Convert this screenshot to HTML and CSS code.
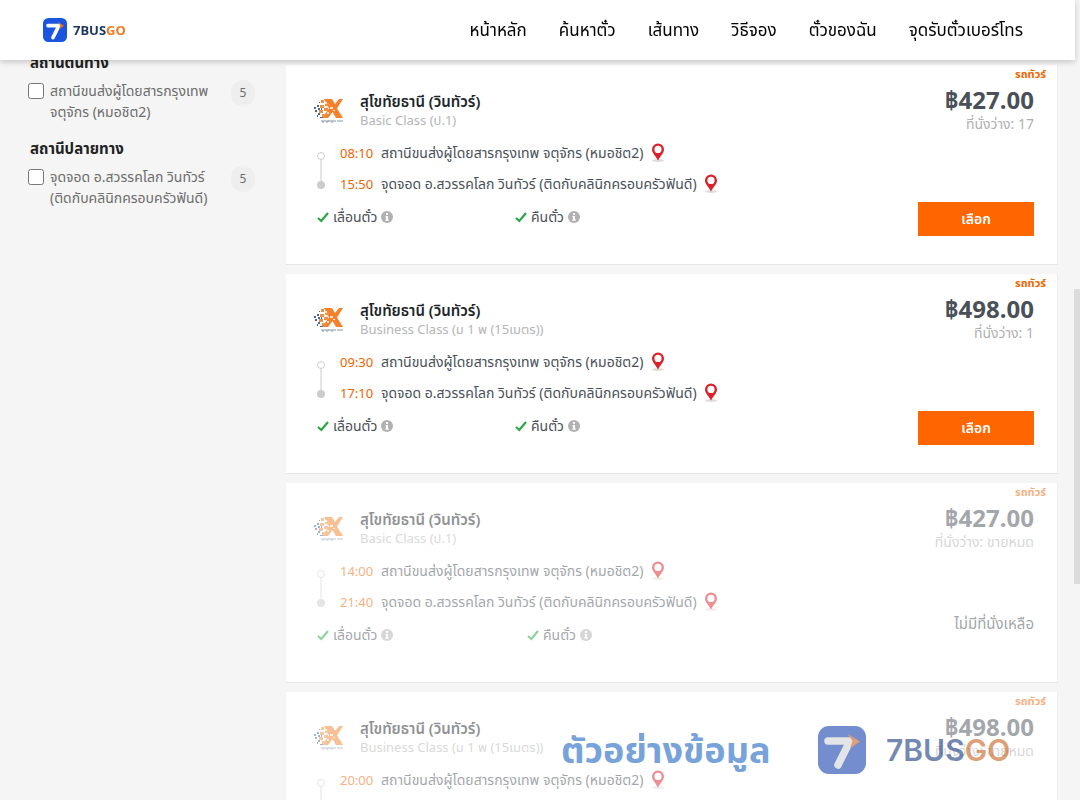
FILE: index.html
```html
<!DOCTYPE html>
<html lang="th">
<head>
<meta charset="utf-8">
<meta name="viewport" content="width=device-width, initial-scale=1">
<title>7BUSGO</title>
<link rel="stylesheet" href="styles.css">
</head>
<body>
<svg class="sprite" aria-hidden="true">
  <symbol id="brand" viewBox="0 0 48 48">
    <rect class="brand-tile" width="48" height="48" rx="11"/>
    <path class="brand-seven" d="M10 15H32L20 39" fill="none" stroke-width="7.5" stroke-linecap="round" stroke-linejoin="round"/>
    <path class="brand-arrow" d="M29 7.500L42 15.500L32 22.500L34.500 15Z"/>
  </symbol>
  <symbol id="operator" viewBox="0 0 32 28">
    <path d="M11 2H19L22 7L26 2H30L24 11.500L30 21H23L19.500 15L15 21H9L16 11.500Z" fill="#f5822a"/>
    <path d="M8 3h3v3h-3zM12 6h4v3h-4zM7 8h4v3H7zM11 11h4v3h-4zM6 13h4v3H6zM9 17h4v3H9z" fill="#ef9145"/>
    <path d="M6 5h1v1H6zM4 8h2v2H4zM1 10h2v2H1zM5 11h2v2H5zM2 13h2v2H2zM5 16h2v2H5zM4 18h1v2H4zM8 11h1v2H8zM7 20h3v1H7z" fill="#456a9a"/>
    <path d="M12 5h2v2h-2zM13 9h2v2h-2zM14 15h2v2h-2zM17 10h3v2h-3zM20 13h2v1h-2z" fill="#fbe3cf"/>
    <path d="M9 23v2h2v-2M13 23v2h2v-2M16 23v2M18 23v2h2v-2M21 24h2M25 23v2M27 23v2M29 23v2" fill="none" stroke="#8796ae" stroke-width="1"/>
  </symbol>
  <symbol id="pin" viewBox="0 0 14 20">
    <ellipse cx="7" cy="17.500" rx="6" ry="1.500" fill="#e0dcdc"/>
    <path fill-rule="evenodd" d="M7 0.500A6 6 0 0 0 1 6.500C1 10 4.500 12.500 7 17.500C9.500 12.500 13 10 13 6.500A6 6 0 0 0 7 0.500ZM7 2.800A3.600 3.600 0 1 1 7 10A3.600 3.600 0 1 1 7 2.800Z" fill="#dc2028"/>
  </symbol>
  <symbol id="check" viewBox="0 0 12 12"><path d="M1 7L4.300 10L11 2" fill="none" stroke="#28a745" stroke-width="2.200"/></symbol>
  <symbol id="info" viewBox="0 0 12 12"><circle cx="6" cy="6" r="6" fill="#b1b1b1"/><path d="M5 2h2v2H5zM4.500 5H7v3.500h.8v1.200H4.300V8.500H5V6.200h-.5z" fill="#fff"/></symbol>
  <symbol id="route" viewBox="0 0 10 40"><path d="M5 8V34" stroke="#ddd" stroke-width="1.500"/><circle cx="5" cy="5" r="3.500" fill="#fff" stroke="#ccc"/><circle cx="5" cy="34" r="4" fill="#ccc"/></symbol>
</svg>

<header class="header">
  <a class="brand" href="#"><svg class="brand-icon" aria-hidden="true"><use href="#brand"/></svg><span>7BUS<span class="go">GO</span></span></a>
  <nav class="nav">
    <a href="#">หน้าหลัก</a><a href="#">ค้นหาตั๋ว</a><a href="#">เส้นทาง</a><a href="#">วิธีจอง</a><a href="#">ตั๋วของฉัน</a><a href="#">จุดรับตั๋วเบอร์โทร</a>
  </nav>
</header>

<main class="page">
  <aside class="filters">
    <h3>สถานีต้นทาง</h3>
    <div class="filter">
      <input type="checkbox" id="origin">
      <label for="origin">สถานีขนส่งผู้โดยสารกรุงเทพ<br>จตุจักร (หมอชิต2)</label>
      <span class="count">5</span>
    </div>
    <h3>สถานีปลายทาง</h3>
    <div class="filter">
      <input type="checkbox" id="destination">
      <label for="destination">จุดจอด อ.สวรรคโลก วินทัวร์<br>(ติดกับคลินิกครอบครัวฟันดี)</label>
      <span class="count">5</span>
    </div>
  </aside>

  <section class="trips">
    <article class="trip">
      <span class="tag">รถทัวร์</span>
      <div class="details">
        <div class="operator"><svg class="operator-logo" aria-hidden="true"><use href="#operator"/></svg><div><h2>สุโขทัยธานี (วินทัวร์)</h2><p>Basic Class (ป.1)</p></div></div>
        <div class="journey"><svg class="route" aria-hidden="true"><use href="#route"/></svg>
          <div class="stops">
            <div class="stop"><time>08:10</time><span>สถานีขนส่งผู้โดยสารกรุงเทพ จตุจักร (หมอชิต2)</span><svg class="pin"><use href="#pin"/></svg></div>
            <div class="stop"><time>15:50</time><span>จุดจอด อ.สวรรคโลก วินทัวร์ (ติดกับคลินิกครอบครัวฟันดี)</span><svg class="pin"><use href="#pin"/></svg></div>
          </div>
        </div>
        <div class="perks"><span class="perk"><svg><use href="#check"/></svg>เลื่อนตั๋ว<svg><use href="#info"/></svg></span><span class="perk"><svg><use href="#check"/></svg>คืนตั๋ว<svg><use href="#info"/></svg></span></div>
      </div>
      <div class="fare"><strong>฿427.00</strong><p>ที่นั่งว่าง: 17</p><button type="button">เลือก</button></div>
    </article>

    <article class="trip">
      <span class="tag">รถทัวร์</span>
      <div class="details">
        <div class="operator"><svg class="operator-logo" aria-hidden="true"><use href="#operator"/></svg><div><h2>สุโขทัยธานี (วินทัวร์)</h2><p>Business Class (ม 1 พ (15เมตร))</p></div></div>
        <div class="journey"><svg class="route" aria-hidden="true"><use href="#route"/></svg>
          <div class="stops">
            <div class="stop"><time>09:30</time><span>สถานีขนส่งผู้โดยสารกรุงเทพ จตุจักร (หมอชิต2)</span><svg class="pin"><use href="#pin"/></svg></div>
            <div class="stop"><time>17:10</time><span>จุดจอด อ.สวรรคโลก วินทัวร์ (ติดกับคลินิกครอบครัวฟันดี)</span><svg class="pin"><use href="#pin"/></svg></div>
          </div>
        </div>
        <div class="perks"><span class="perk"><svg><use href="#check"/></svg>เลื่อนตั๋ว<svg><use href="#info"/></svg></span><span class="perk"><svg><use href="#check"/></svg>คืนตั๋ว<svg><use href="#info"/></svg></span></div>
      </div>
      <div class="fare"><strong>฿498.00</strong><p>ที่นั่งว่าง: 1</p><button type="button">เลือก</button></div>
    </article>

    <article class="trip sold-out">
      <span class="tag">รถทัวร์</span>
      <div class="details">
        <div class="operator"><svg class="operator-logo" aria-hidden="true"><use href="#operator"/></svg><div><h2>สุโขทัยธานี (วินทัวร์)</h2><p>Basic Class (ป.1)</p></div></div>
        <div class="journey"><svg class="route" aria-hidden="true"><use href="#route"/></svg>
          <div class="stops">
            <div class="stop"><time>14:00</time><span>สถานีขนส่งผู้โดยสารกรุงเทพ จตุจักร (หมอชิต2)</span><svg class="pin"><use href="#pin"/></svg></div>
            <div class="stop"><time>21:40</time><span>จุดจอด อ.สวรรคโลก วินทัวร์ (ติดกับคลินิกครอบครัวฟันดี)</span><svg class="pin"><use href="#pin"/></svg></div>
          </div>
        </div>
        <div class="perks"><span class="perk"><svg><use href="#check"/></svg>เลื่อนตั๋ว<svg><use href="#info"/></svg></span><span class="perk"><svg><use href="#check"/></svg>คืนตั๋ว<svg><use href="#info"/></svg></span></div>
      </div>
      <div class="fare"><strong>฿427.00</strong><p>ที่นั่งว่าง: ขายหมด</p><span class="none">ไม่มีที่นั่งเหลือ</span></div>
    </article>

    <article class="trip sold-out">
      <span class="tag">รถทัวร์</span>
      <div class="details">
        <div class="operator"><svg class="operator-logo" aria-hidden="true"><use href="#operator"/></svg><div><h2>สุโขทัยธานี (วินทัวร์)</h2><p>Business Class (ม 1 พ (15เมตร))</p></div></div>
        <div class="journey"><svg class="route" aria-hidden="true"><use href="#route"/></svg>
          <div class="stops">
            <div class="stop"><time>20:00</time><span>สถานีขนส่งผู้โดยสารกรุงเทพ จตุจักร (หมอชิต2)</span><svg class="pin"><use href="#pin"/></svg></div>
          </div>
        </div>
      </div>
      <div class="fare"><strong>฿498.00</strong><p>ที่นั่งว่าง: ขายหมด</p></div>
    </article>
  </section>
</main>

<div class="watermark">
  <span class="sample">ตัวอย่างข้อมูล</span>
  <svg class="watermark-icon" aria-hidden="true"><use href="#brand"/></svg>
  <span class="watermark-name">7BUS<span class="go">GO</span></span>
</div>
<div class="scrollbar"></div>
</body>
</html>
```
FILE: styles.css
```css
* { box-sizing: border-box; }
body {
  margin: 0;
  height: 100vh;
  overflow: hidden;
  background: #f5f5f5;
  color: #495057;
  font-family: "Noto Sans", "Noto Sans Thai", sans-serif;
  font-size: 14px;
  line-height: 20px;
}
h2, h3, p { margin: 0; }
a { color: inherit; text-decoration: none; }
.sprite { position: absolute; width: 0; height: 0; }
.brand-tile { fill: var(--tile, #1b55df); }
.brand-seven { stroke: var(--seven, #fff); }
.brand-arrow { fill: var(--arrow, #f07018); }
.header {
  position: fixed;
  z-index: 2;
  top: 0;
  left: 0;
  right: 5px;
  height: 60px;
  padding: 0 52px 0 43px;
  display: flex;
  align-items: center;
  justify-content: space-between;
  background: #fff;
  box-shadow: 0 2px 6px rgba(0, 0, 0, .2);
}
.brand { display: flex; align-items: center; gap: 6px; color: #1c355e; font-size: 13px; font-weight: 700; }
.brand-icon { width: 24px; height: 24px; }
.go { color: #f47a20; }
.nav { display: flex; gap: 32px; color: #000; font-size: 17px; }
.page { display: flex; gap: 31px; padding: 52px 22px 0 28px; }
.filters { flex: 0 0 227px; color: #6c6c6c; }
.filters h3 { padding-left: 2px; color: #222; font-size: 15px; line-height: 20px; }
.filter { display: flex; align-items: flex-start; gap: 6px; padding: 8px 0 16px; }
.filter input { width: 16px; height: 16px; margin: 3px 0 0; }
.filter label { flex: 1; line-height: 21px; white-space: nowrap; }
.count { width: 24px; height: 26px; border-radius: 12px; background: #eee; text-align: center; line-height: 26px; font-size: 12px; }
.trips { flex: 1; display: flex; flex-direction: column; gap: 9px; padding-top: 13px; }
.trip {
  position: relative;
  display: flex;
  justify-content: space-between;
  min-height: 200px;
  padding: 26px 23px 28px 27px;
  background: #fff;
  border-bottom: 1px solid #e4e6e7;
  border-right: 1px solid #eef0f0;
}
.tag { position: absolute; top: 1px; right: 11px; color: #f06400; font-size: 11px; line-height: 16px; font-weight: 700; }
.details { flex: 1; }
.operator { display: flex; align-items: center; gap: 15px; }
.operator-logo { width: 32px; height: 28px; margin-top: 2px; }
.operator h2 { color: #212529; font-size: 15px; line-height: 20px; font-weight: 600; }
.operator p { color: #b5b5b5; font-size: 13px; line-height: 18px; }
.journey { display: flex; gap: 14px; padding: 8px 0 8px 3px; }
.route { width: 10px; height: 40px; margin-top: 14px; }
.stop { display: flex; align-items: center; gap: 7px; height: 31px; color: #495057; }
.stop time { width: 34px; color: #f06400; font-size: 13px; }
.pin { width: 14px; height: 20px; }
.perks { display: flex; padding-left: 4px; }
.perk { display: flex; align-items: center; gap: 4px; width: 198px; }
.sold-out .perk:first-child { width: 210px; }
.perk svg { width: 12px; height: 12px; }
.fare { display: flex; flex-direction: column; align-items: flex-end; width: 116px; }
.fare strong { font-size: 24px; line-height: 18px; }
.fare p { color: #b0b0b0; line-height: 30px; white-space: nowrap; }
.fare button { width: 100%; height: 34px; margin-top: auto; border: 0; background: #ff6600; color: #fff; font: inherit; font-weight: 600; }
.fare .none { margin-top: auto; font-size: 15px; line-height: 62px; }
.sold-out > * { opacity: .5; }
.watermark {
  --tile: #1742b0;
  --seven: #d0d3da;
  --arrow: #c8601c;
  position: absolute;
  z-index: 1;
  left: 561px;
  bottom: 26px;
  display: flex;
  align-items: center;
  opacity: .6;
  white-space: nowrap;
}
.sample { width: 257px; color: #2067c2; font-size: 36px; line-height: 48px; font-weight: 700; }
.watermark-icon { width: 48px; height: 48px; }
.watermark-name { margin-left: 20px; color: #173b80; font-family: Inter, sans-serif; font-size: 30px; line-height: 48px; font-weight: 600; }
.watermark .go { color: #c8601c; }
.scrollbar { position: fixed; top: 289px; right: 0; width: 6px; height: 295px; background: #dcdcdc; }
```
